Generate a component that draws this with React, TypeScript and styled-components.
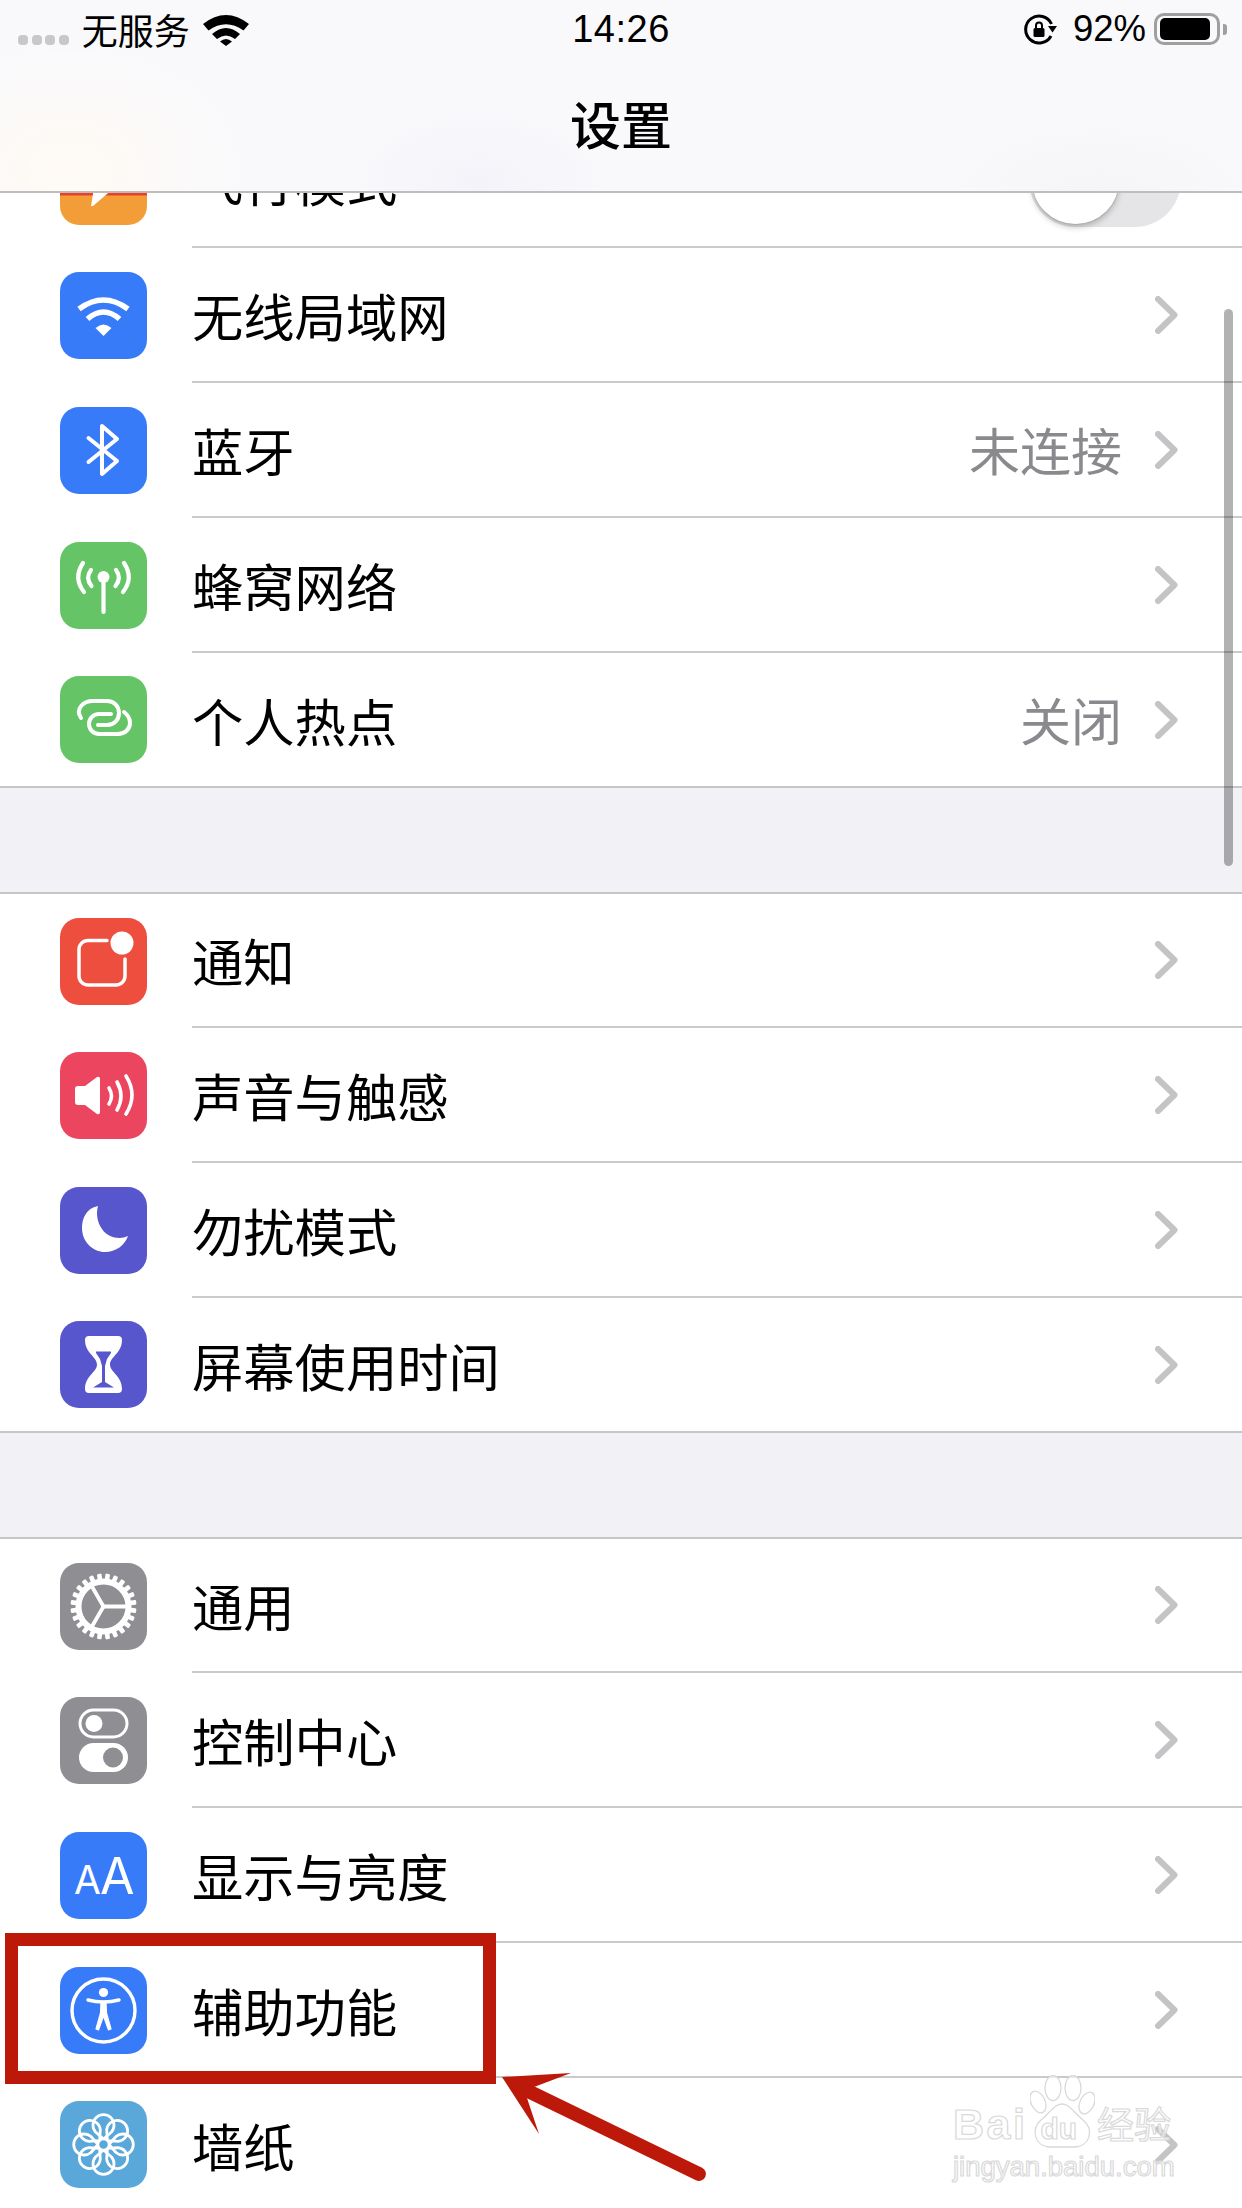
import { ReactNode } from 'react';
import styled, { createGlobalStyle } from 'styled-components';

const GlobalStyle = createGlobalStyle`
    html, body {
        margin: 0;
        padding: 0;
        background: #f2f2f7;
    }
    * {
        box-sizing: border-box;
    }
`;

const Phone = styled.div`
    position: relative;
    width: 1242px;
    height: 2208px;
    overflow: hidden;
    padding-top: 114px;
    background: #f1f1f6;
    font-family: "Noto Sans CJK SC", "Liberation Sans", sans-serif;
    color: #000;
`;

const NavBar = styled.header`
    position: absolute;
    top: 0;
    left: 0;
    right: 0;
    height: 193px;
    z-index: 2;
    border-bottom: 2px solid #bdbdbf;
    background:
        radial-gradient(ellipse 180px 130px at 70px 170px, #fffaf4 0%, rgba(255, 250, 244, 0) 100%),
        radial-gradient(ellipse 130px 70px at 480px 180px, #f3f3f9 0%, rgba(243, 243, 249, 0) 100%),
        radial-gradient(ellipse 160px 70px at 1100px 190px, #f5f5f7 0%, rgba(245, 245, 247, 0) 100%),
        #f9f9fc;
`;

const StatusBar = styled.div`
    display: grid;
    grid-template-columns: 1fr auto 1fr;
    align-items: center;
    height: 58px;
    padding: 0 15px 0 18px;
    font-family: "Liberation Sans", "Noto Sans CJK SC", sans-serif;
    font-size: 36.5px;
`;

const StatusLeft = styled.div`
    display: flex;
    align-items: center;
`;

const StatusRight = styled.div`
    display: flex;
    align-items: center;
    justify-content: flex-end;
`;

const SignalDots = styled.div`
    display: flex;
    gap: 3.6px;
    margin: 22px 13px 0 0;
`;

const SignalDot = styled.span`
    width: 10px;
    height: 10px;
    border-radius: 4px;
    background: #c8c8c8;
`;

const Carrier = styled.span`
    width: 106px;
    font-family: "Noto Sans CJK SC", sans-serif;
    font-size: 36px;
    white-space: nowrap;
    line-height: 1;
`;

const Clock = styled.span`
    margin-left: -3px;
    font-size: 38px;
    letter-spacing: 0.5px;
    line-height: 1;
`;

const Percent = styled.span`
    margin: 0 8px 0 15px;
    line-height: 1;
`;

const Battery = styled.div`
    display: flex;
    align-items: center;
`;

const BatteryShell = styled.div`
    width: 66px;
    height: 32px;
    padding: 2px 3px;
    border: 3px solid #9f9f9f;
    border-radius: 10px;
`;

const BatteryLevel = styled.div`
    width: 92%;
    height: 100%;
    border-radius: 5px;
    background: #000;
`;

const BatteryNub = styled.div`
    width: 4px;
    height: 11px;
    margin-left: 3px;
    border-radius: 0 3px 3px 0;
    background: #9f9f9f;
`;

const NavTitle = styled.h1`
    margin: 0;
    padding-top: 33px;
    font-size: 51px;
    font-weight: 500;
    line-height: 64px;
    text-align: center;
`;

const Section = styled.section<{ $first?: boolean }>`
    margin-top: ${(props) => (props.$first ? 0 : 104)}px;
    margin-bottom: ${(props) => (props.$first ? 1 : 0)}px;
    border-top: ${(props) => (props.$first ? 0 : 2)}px solid #c6c6c8;
    border-bottom: 2px solid #c6c6c8;
    background: #fff;
`;

const Row = styled.div`
    display: flex;
    align-items: center;
    gap: 45px;
    height: 135px;
    padding-left: 60px;

    &:first-child {
        height: 134px;
    }

    &:last-child {
        height: 133px;
    }
`;

const IconTile = styled.div<{ $tint: string }>`
    flex: none;
    width: 87px;
    height: 87px;
    border-radius: 19px;
    overflow: hidden;
    background: ${(props) => props.$tint};

    svg {
        display: block;
    }
`;

const RowBody = styled.div`
    flex: 1;
    display: flex;
    align-items: center;
    height: 100%;
    padding-right: 64px;
    border-bottom: 2px solid #cacacc;

    ${Row}:last-child & {
        border-bottom: 0;
    }
`;

const Label = styled.span`
    flex: 1;
    font-size: 51.3px;
    line-height: 1;
    white-space: nowrap;
`;

const Value = styled.span`
    margin-right: 33px;
    font-size: 51px;
    line-height: 1;
    color: #8a8a8e;
`;

const Toggle = styled.div`
    width: 152px;
    height: 93px;
    margin-right: -3px;
    padding: 3px;
    border-radius: 47px;
    background: #e5e5e7;
`;

const ToggleKnob = styled.div`
    width: 87px;
    height: 87px;
    border-radius: 50%;
    background: #fff;
    box-shadow: 0 3px 6px rgba(0, 0, 0, 0.25), 0 0 0 1px rgba(0, 0, 0, 0.07);
`;

const ScrollThumb = styled.div`
    position: absolute;
    left: 1224px;
    top: 309px;
    width: 9px;
    height: 557px;
    border-radius: 5px;
    background: rgba(0, 0, 0, 0.3);
`;

const RedFrame = styled.div`
    position: absolute;
    left: 5px;
    top: 1933px;
    width: 491px;
    height: 151px;
    border: 13px solid #bd190b;
`;

const ArrowMark = styled.svg`
    position: absolute;
    left: 490px;
    top: 2060px;
`;

const Watermark = styled.div`
    position: absolute;
    left: 953px;
    top: 2075px;
    width: 226px;
    height: 108px;
    color: rgba(255, 255, 255, 0.7);
    -webkit-text-stroke: 1.2px #d9d9d9;
    font-family: "Liberation Sans", "Noto Sans CJK SC", sans-serif;
`;

const WatermarkPaw = styled.svg`
    position: absolute;
    left: 77px;
    top: 0;
`;

const WatermarkTop = styled.div`
    position: absolute;
    left: 0;
    top: 26px;
    display: flex;
    align-items: baseline;
    font-size: 43px;
    font-weight: 700;
    letter-spacing: 2.5px;
    line-height: 44px;
    white-space: nowrap;
`;

const WatermarkDu = styled.span`
    margin-left: 13px;
    font-size: 30px;
    letter-spacing: 0;
`;

const WatermarkCn = styled.span`
    margin-left: 20px;
    font-family: "Noto Sans CJK SC", sans-serif;
    font-size: 37px;
    font-weight: 400;
    letter-spacing: 0;
`;

const WatermarkSmall = styled.div`
    position: absolute;
    left: 0;
    top: 77px;
    font-size: 27.5px;
    line-height: 30px;
    white-space: nowrap;
`;

const Chevron = () => (
    <svg width="23" height="38" viewBox="0 0 23 38" fill="none">
        <path d="M3 3 L19.5 19 L3 35" stroke="#c4c4c7" strokeWidth="6" strokeLinecap="round" strokeLinejoin="round" />
    </svg>
);

const Tile = ({ children }: { children: ReactNode }) => (
    <svg width="87" height="87" viewBox="0 0 87 87" fill="none">
        {children}
    </svg>
);

const white = { stroke: '#fff', strokeLinecap: 'round' as const, strokeLinejoin: 'round' as const };

const PETALS = [0, 45, 90, 135, 180, 225, 270, 315];

const icons: Record<string, ReactNode> = {
    plane: (
        <Tile>
            <rect x="0" y="55" width="87" height="2.5" fill="#e8402a" />
            {/* only the tail sticks out below the nav bar */}
            <path d="M34 50 L54 50 L33 68 L31 68Z" fill="#fff" />
        </Tile>
    ),
    wifi: (
        <Tile>
            <g {...white} strokeWidth="5.5" strokeLinecap="butt">
                <path d="M19 37 Q43.5 19 68 37" />
                <path d="M27.5 47 Q43.5 33 59.5 47" />
            </g>
            <path d="M35.5 56 Q43.5 49 51.5 56 L43.5 64Z" fill="#fff" />
        </Tile>
    ),
    bluetooth: (
        <Tile>
            <path d="M28.5 31 L57 54 L42 67 L42 19 L57 32 L28.5 55" {...white} strokeWidth="4" />
        </Tile>
    ),
    cellular: (
        <Tile>
            <circle cx="43.5" cy="35" r="6" fill="#fff" />
            <g {...white} strokeWidth="4.2">
                <path d="M43.5 36 V70" />
                <path d="M23 21 Q13 36 24 50" />
                <path d="M31 28 Q25 36 31.5 44" />
                <path d="M64 21 Q74 36 63 50" />
                <path d="M56 28 Q62 36 55.5 44" />
            </g>
        </Tile>
    ),
    hotspot: (
        <Tile>
            <g {...white} strokeWidth="4">
                <path d="M21 42 C15 33 23 25 33 25 H47 C54 25 59 30 59 37 C59 44 54 49 47 49 H38" />
                <path d="M64 36 C68 39 70 43 70 47 C70 53 65 58 58 58 H39 C33 58 29 53 29 48 C29 43 33 38 39 38 H51" />
            </g>
        </Tile>
    ),
    notify: (
        <Tile>
            <path d="M47 22.5 H28 a9 9 0 0 0 -9 9 V58 a9 9 0 0 0 9 9 H56 a9 9 0 0 0 9 -9 V41" {...white} strokeWidth="3.5" />
            <circle cx="62" cy="25" r="11.5" fill="#fff" />
        </Tile>
    ),
    sound: (
        <Tile>
            <path d="M18 34 H25 L37 25 Q40 24 40 27 V60 Q40 63 37 62 L25 53 H18 Q15 53 15 50 V37 Q15 34 18 34Z" fill="#fff" />
            <g {...white} strokeWidth="3.6">
                <path d="M49 36 Q54 44 49 52" />
                <path d="M57 30 Q65 44 57 58" />
                <path d="M66 24 Q78 43 66 62" />
            </g>
        </Tile>
    ),
    moon: (
        <Tile>
            <path d="M38 19 C26 21 22 32 22 41 C22 55 33 65 45 65 C56 65 65 58 68 49 C60 53 48 51 42 42 C37 35 36 26 38 19Z" fill="#fff" />
        </Tile>
    ),
    hourglass: (
        <Tile>
            <path d="M29 15 H58 Q62 15 62 19 C62 32 50 36 50 43.5 C50 51 62 55 62 68 Q62 72 58 72 H29 Q25 72 25 68 C25 55 37 51 37 43.5 C37 36 25 32 25 19 Q25 15 29 15Z" fill="#fff" />
            <path d="M36 30.5 H51 V32 L47 38 L45 45 V61 L54 66.5 H33 L42 61 V45 L40 38 L36 32Z" fill="#5756cd" />
        </Tile>
    ),
    gear: (
        <Tile>
            <circle cx="43.5" cy="43.5" r="25" stroke="#fff" strokeWidth="6" />
            {Array.from({ length: 24 }).map((_, i) => (
                <rect key={i} x="41.2" y="10.5" width="4.6" height="9" rx="1.2" fill="#fff" transform={`rotate(${i * 15 + 7.5} 43.5 43.5)`} />
            ))}
            <g {...white} strokeWidth="3.8">
                <path d="M43.5 43.5 H67" />
                <path d="M43.5 43.5 L31.8 23.2" />
                <path d="M43.5 43.5 L31.8 63.8" />
            </g>
        </Tile>
    ),
    control: (
        <Tile>
            <rect x="20" y="13" width="47" height="27" rx="13.5" stroke="#fff" strokeWidth="3" />
            <circle cx="34" cy="26.5" r="8.5" fill="#fff" />
            <rect x="19" y="46" width="49" height="29" rx="14.5" fill="#fff" />
            <circle cx="53" cy="60.5" r="10" fill="#8e8e93" />
        </Tile>
    ),
    display: (
        <Tile>
            <text x="14" y="62" fontFamily="Inter, sans-serif" fontSize="39" fill="#fff">A</text>
            <text x="40" y="62" fontFamily="Inter, sans-serif" fontSize="50" fill="#fff">A</text>
        </Tile>
    ),
    access: (
        <Tile>
            <circle cx="43.5" cy="43.5" r="31.5" stroke="#fff" strokeWidth="3.4" />
            <circle cx="43.5" cy="25.5" r="4.6" fill="#fff" />
            <path d="M28 33 Q43.5 37 59 33" {...white} strokeWidth="3.4" />
            <path d="M41 35 H46 L46.5 46 L51 62 L48.5 63 L43.5 49 L38.5 63 L36 62 L40.5 46Z" fill="#fff" stroke="#fff" strokeWidth="1.2" strokeLinejoin="round" />
        </Tile>
    ),
    wallpaper: (
        <Tile>
            {PETALS.map((a) => (
                <path
                    key={a}
                    d="M43.5 38 L35.5 31 A10.5 10.5 0 1 1 51.5 31Z"
                    stroke="#fff"
                    strokeWidth="2.8"
                    strokeLinejoin="round"
                    transform={`rotate(${a} 43.5 43.5)`}
                />
            ))}
            <circle cx="43.5" cy="43.5" r="5.5" fill="#5aa7d9" stroke="#fff" strokeWidth="2.4" />
        </Tile>
    ),
};

interface ISetting {
    id: string;
    title: string;
    tint: string;
    value?: string;
    toggle?: boolean;
}

const BLUE = '#387bf8';
const GREEN = '#65c466';
const INDIGO = '#5756cd';
const GRAY = '#8e8e93';

const sections: ISetting[][] = [
    [
        { id: 'plane', title: '飞行模式', tint: '#f29d38', toggle: true },
        { id: 'wifi', title: '无线局域网', tint: BLUE },
        { id: 'bluetooth', title: '蓝牙', tint: BLUE, value: '未连接' },
        { id: 'cellular', title: '蜂窝网络', tint: GREEN },
        { id: 'hotspot', title: '个人热点', tint: GREEN, value: '关闭' },
    ],
    [
        { id: 'notify', title: '通知', tint: '#ee4e3d' },
        { id: 'sound', title: '声音与触感', tint: '#ec4560' },
        { id: 'moon', title: '勿扰模式', tint: INDIGO },
        { id: 'hourglass', title: '屏幕使用时间', tint: INDIGO },
    ],
    [
        { id: 'gear', title: '通用', tint: GRAY },
        { id: 'control', title: '控制中心', tint: GRAY },
        { id: 'display', title: '显示与亮度', tint: BLUE },
        { id: 'access', title: '辅助功能', tint: BLUE },
        { id: 'wallpaper', title: '墙纸', tint: '#5aa7d9' },
    ],
];

function App() {
    return (
        <Phone>
            <GlobalStyle />
            <NavBar>
                <StatusBar>
                    <StatusLeft>
                        <SignalDots>
                            <SignalDot />
                            <SignalDot />
                            <SignalDot />
                            <SignalDot />
                        </SignalDots>
                        <Carrier>无服务</Carrier>
                        <svg width="46" height="33" viewBox="0 0 46 33" style={{ marginLeft: 15 }}>
                            <path d="M0 11 Q23 -7 46 11 L40.5 17.5 Q23 5 5.5 17.5Z" />
                            <path d="M9 21 Q23 9 37 21 L32 26 Q23 19 14 26Z" />
                            <path d="M17 28.5 Q23 23.5 29 28.5 L23 33Z" />
                        </svg>
                    </StatusLeft>
                    <Clock>14:26</Clock>
                    <StatusRight>
                        <svg width="34" height="31" viewBox="0 0 34 31" fill="none">
                            <path d="M27 22 A13.5 13.5 0 1 1 27.5 10" stroke="#000" strokeWidth="3" />
                            <path d="M24 12 H33 L28.5 18.5Z" fill="#000" />
                            <rect x="9.5" y="14" width="11" height="9" rx="1.5" fill="#000" />
                            <path d="M12 14 V11.5 a3 3 0 0 1 6 0 V14" stroke="#000" strokeWidth="2" />
                        </svg>
                        <Percent>92%</Percent>
                        <Battery>
                            <BatteryShell>
                                <BatteryLevel />
                            </BatteryShell>
                            <BatteryNub />
                        </Battery>
                    </StatusRight>
                </StatusBar>
                <NavTitle>设置</NavTitle>
            </NavBar>

            {sections.map((rows, index) => (
                <Section key={rows[0].id} $first={index === 0}>
                    {rows.map((row) => (
                        <Row key={row.id}>
                            <IconTile $tint={row.tint}>{icons[row.id]}</IconTile>
                            <RowBody>
                                <Label>{row.title}</Label>
                                {row.value && <Value>{row.value}</Value>}
                                {row.toggle ? (
                                    <Toggle>
                                        <ToggleKnob />
                                    </Toggle>
                                ) : (
                                    <Chevron />
                                )}
                            </RowBody>
                        </Row>
                    ))}
                </Section>
            ))}

            <ScrollThumb />
            <RedFrame />
            <ArrowMark width="230" height="130" viewBox="490 2060 230 130">
                <path d="M502 2077 L571 2073 L534 2087 L527 2098 L539 2134Z" fill="#bd190b" />
                <path d="M530 2092 L699 2174" stroke="#bd190b" strokeWidth="14" strokeLinecap="round" />
            </ArrowMark>
            <Watermark>
                <WatermarkPaw width="65" height="73" viewBox="0 0 65 73" fill="rgba(255,255,255,0.6)" stroke="#d9d9d9" strokeWidth="1.3">
                    <ellipse cx="8" cy="27" rx="7" ry="11.5" transform="rotate(-25 8 27)" />
                    <ellipse cx="23" cy="13" rx="8" ry="12.5" />
                    <ellipse cx="43" cy="13" rx="8" ry="12.5" />
                    <ellipse cx="57" cy="28" rx="7" ry="11.5" transform="rotate(25 57 28)" />
                    <path d="M32 29 C24 29 20 38 11 45 C0 54 5 72 20 72 H44 C60 72 65 54 53 45 C44 38 40 29 32 29Z" />
                </WatermarkPaw>
                <WatermarkTop>
                    Bai
                    <WatermarkDu>du</WatermarkDu>
                    <WatermarkCn>经验</WatermarkCn>
                </WatermarkTop>
                <WatermarkSmall>jingyan.baidu.com</WatermarkSmall>
            </Watermark>
        </Phone>
    );
}

export default App;
